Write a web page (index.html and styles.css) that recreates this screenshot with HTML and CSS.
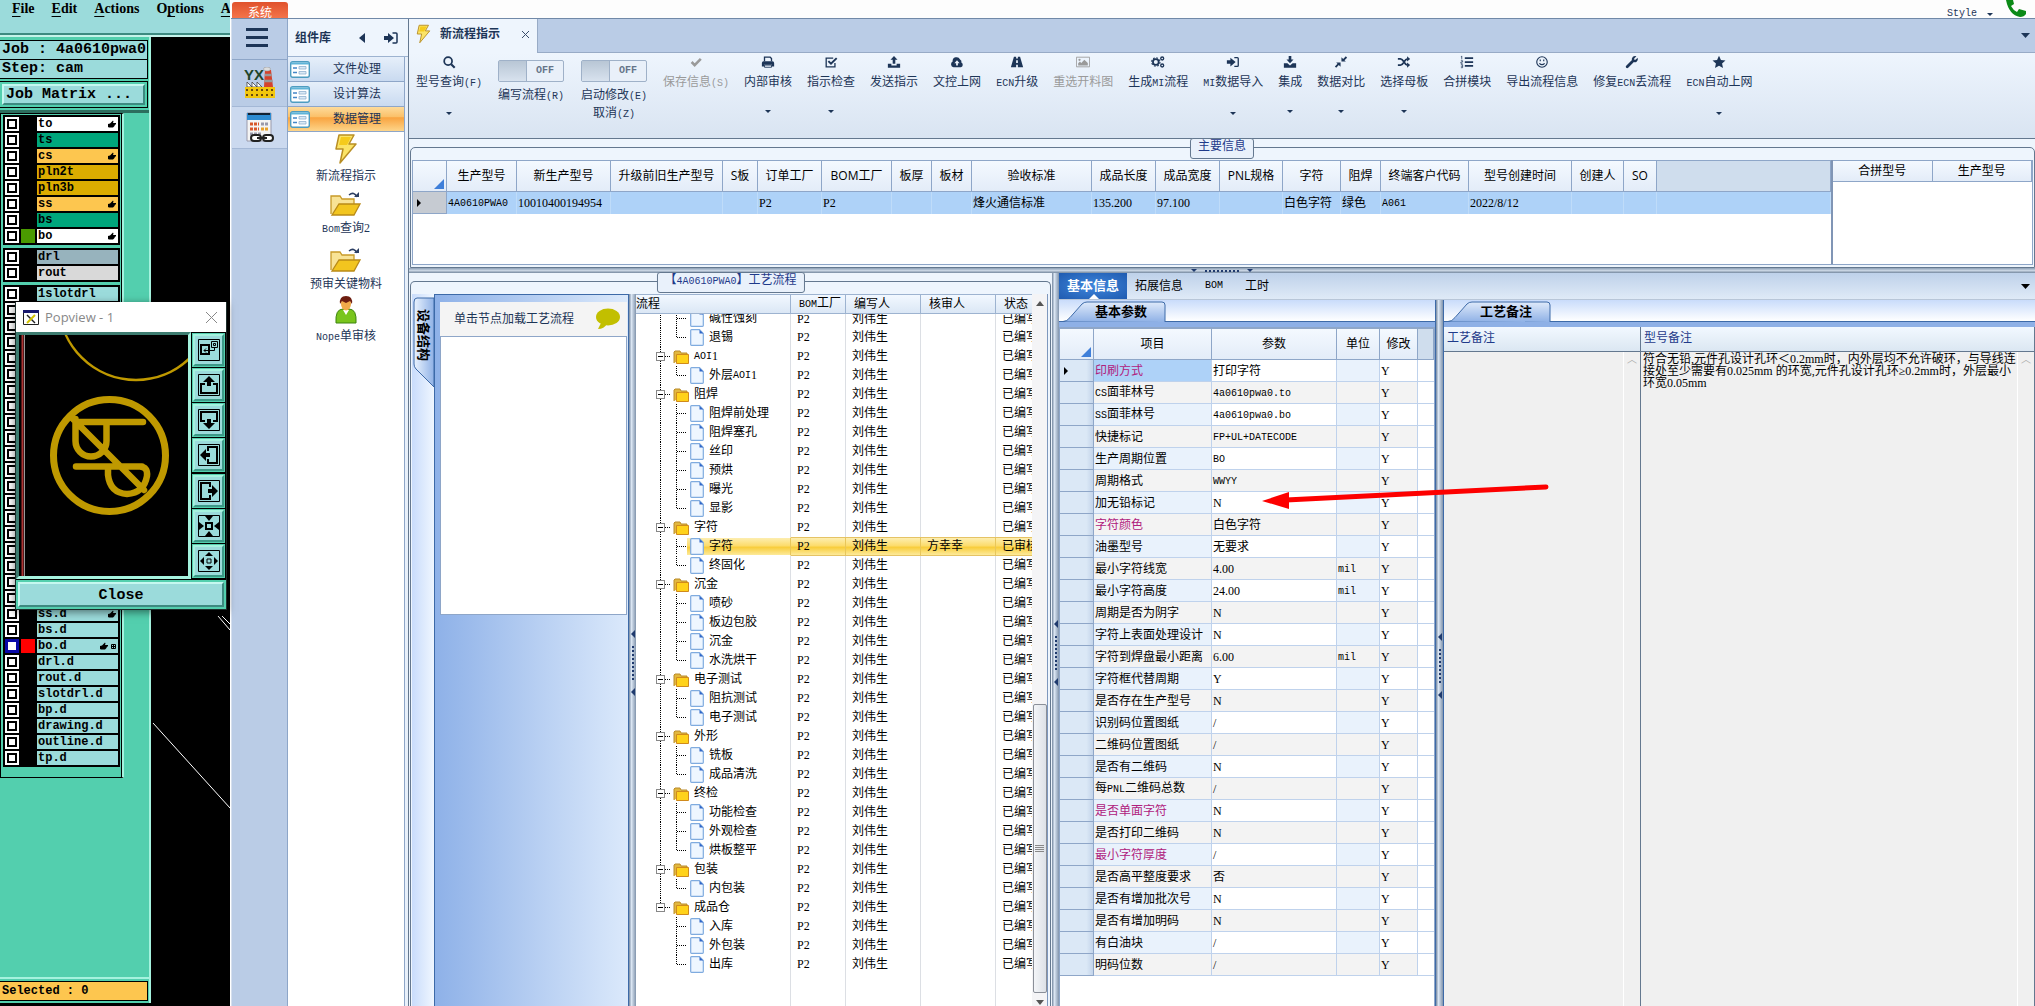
FILE: index.html
```html
<!doctype html>
<html lang="zh-CN">
<head>
<meta charset="utf-8">
<title>新流程指示</title>
<link rel="stylesheet" href="styles.css">
</head>
<body>
<svg class="sprite" aria-hidden="true">
	<symbol id="i-search" viewBox="0 0 16 16"><circle cx="7" cy="7" r="4.5" fill="none" stroke="currentColor" stroke-width="2"/><path d="M10.5 10.5l4 4" stroke="currentColor" stroke-width="2.4"/></symbol>
	<symbol id="i-check" viewBox="0 0 16 16"><path d="M3 8l3.5 3.5L13.5 4.5" fill="none" stroke="currentColor" stroke-width="3"/></symbol>
	<symbol id="i-print" viewBox="0 0 16 16"><path d="M4 7V2.5h6.5l1.500 1.500v3" fill="none" stroke="currentColor" stroke-width="1.500"/><path d="M1 9q0-2 2-2h10q2 0 2 2v4h-2.500v-2h-9v2H1z" fill="currentColor"/><path d="M4 11.500h8v2.500H4z" fill="none" stroke="currentColor"/></symbol>
	<symbol id="i-square" viewBox="0 0 16 16"><path d="M12.500 9v4.500h-10V3.500h8" fill="none" stroke="currentColor" stroke-width="1.500"/><path d="M5 7l3 3 6.500-6.500" fill="none" stroke="currentColor" stroke-width="2.200"/></symbol>
	<symbol id="i-upload" viewBox="0 0 16 16"><path d="M8 1l4 4.500H9.500V10h-3V5.500H4zM1 10h4v2h6v-2h4v4.500H1z" fill="currentColor"/></symbol>
	<symbol id="i-download" viewBox="0 0 16 16"><path d="M6.500 1h3v4H12L8 9.500 4 5h2.500zM1 9.500h4l3 2.500 3-2.500h4v5H1z" fill="currentColor"/></symbol>
	<symbol id="i-cloud" viewBox="0 0 16 16"><path d="M4 14a3.500 3.500 0 0 1-1-6.500A4.500 4.500 0 0 1 11.500 5 3 3 0 0 1 13 8.500 3 3 0 0 1 12.500 14z" fill="currentColor"/><path d="M8 6l3 3.500H9V12H7V9.500H5z" fill="#eef4fc"/></symbol>
	<symbol id="i-road" viewBox="0 0 16 16"><path d="M4.500 2h2.500v2h2V2h2.500l3.500 12H9v-3H7v3H1zM7 6v3h2V6z" fill="currentColor" fill-rule="evenodd"/></symbol>
	<symbol id="i-image" viewBox="0 0 16 16"><path d="M.500 2.500h15v11H.500z" fill="none" stroke="currentColor"/><circle cx="4" cy="5.500" r="1.300" fill="currentColor"/><path d="M2.500 12V9.500l2-2 1.500 1.500 3.500-3.500 4 3.500V12z" fill="currentColor"/></symbol>
	<symbol id="i-gears" viewBox="0 0 16 16"><circle cx="5.500" cy="8" r="3.300" fill="none" stroke="currentColor" stroke-width="2"/><circle cx="5.500" cy="8" r="4.800" fill="none" stroke="currentColor" stroke-width="1.200" stroke-dasharray="2 1.770"/><circle cx="12.800" cy="4" r="1.700" fill="none" stroke="currentColor" stroke-width="1.500"/><circle cx="12.800" cy="12" r="1.700" fill="none" stroke="currentColor" stroke-width="1.500"/></symbol>
	<symbol id="i-signin" viewBox="0 0 16 16"><path d="M1 6h4V3l6 5-6 5v-3H1z" fill="currentColor"/><path d="M9.500 3H13q1 0 1 1v8q0 1-1 1H9.500" fill="none" stroke="currentColor" stroke-width="1.500"/></symbol>
	<symbol id="i-compress" viewBox="0 0 16 16"><path d="M8.500 7.500V2.500l2 2L13.500 1.500l1.500 1.500-3 3 1.500 1.500zM7.500 8.500v5l-2-2-3 3L1 13l3-3-1.500-1.500z" fill="currentColor"/></symbol>
	<symbol id="i-shuffle" viewBox="0 0 16 16"><path d="M1 4.500h3c4 0 4 7 8 7M1 11.500h3c4 0 4-7 8-7" fill="none" stroke="currentColor" stroke-width="2"/><path d="M11.500 1.500l3.500 3-3.500 3zM11.500 8.500l3.500 3-3.500 3z" fill="currentColor"/></symbol>
	<symbol id="i-list" viewBox="0 0 16 16"><path d="M5.500 3.500H15M5.500 8H15M5.500 12.500H15" stroke="currentColor" stroke-width="2"/><path d="M2 1v4M1 2h1M1 6.500h2v1.500H1v1.500h2M1 11h2v3.500H1M1 12.800h2" fill="none" stroke="currentColor" stroke-width=".8"/></symbol>
	<symbol id="i-smile" viewBox="0 0 16 16"><circle cx="8" cy="8" r="6" fill="none" stroke="currentColor" stroke-width="1.300"/><path d="M6 5v2M10 5v2M5 9.500q3 3 6 0" fill="none" stroke="currentColor" stroke-width="1.300"/></symbol>
	<symbol id="i-wrench" viewBox="0 0 16 16"><path d="M2.500 13.500l6-6" stroke="currentColor" stroke-width="3.200" stroke-linecap="round"/><path d="M13 1.500L10.500 4v1.500H12L14.500 3q1 3-1.500 5-3 1-5-1-1-3 1-5 2-1.200 4-.5z" fill="currentColor"/></symbol>
	<symbol id="i-star" viewBox="0 0 16 16"><path d="M8 .8l2.200 4.800 5.200.6-3.900 3.500 1.100 5.200L8 12.300l-4.600 2.600 1.100-5.200L.6 6.200l5.200-.6z" fill="currentColor"/></symbol>
	<symbol id="i-bolt" viewBox="0 0 24 32"><path d="M5 2h15l-5 9h7L6 30l3-14H2z" fill="#fbe467" stroke="#b98f25" stroke-width="1.500" stroke-linejoin="round"/><path d="M7 4h10l-4 8H5z" fill="#f5cb1c"/></symbol>
	<symbol id="i-open" viewBox="0 0 32 26"><path d="M1 23V5h9l2 3h12v5" fill="#f8e396" stroke="#c79a28" stroke-width="1.300"/><path d="M2 24l7-11h21l-6 11z" fill="#f2c51f" stroke="#b98a17" stroke-width="1.300"/><path d="M19 4q5-4 8 2" fill="none" stroke="#2c3f63" stroke-width="1.600"/><path d="M24 6h5V1z" fill="#2c3f63"/></symbol>
	<symbol id="i-user" viewBox="0 0 24 30"><path d="M2 28q-1-14 7-14h6q8 0 7 14z" fill="#79c51d" stroke="#3d8410"/><path d="M9 15l3 5 3-5z" fill="#fff"/><ellipse cx="12" cy="9" rx="5" ry="6.500" fill="#f0a94a"/><path d="M6 9q-1-8 6-8t6 8l-2-3-4 2-4-2z" fill="#6d1d10"/></symbol>
	<symbol id="i-form" viewBox="0 0 20 17"><rect x=".7" y=".7" width="18.600" height="15.600" rx="2" fill="#fff" stroke="#4d9cc0" stroke-width="1.400"/><path d="M1 2.500h18" stroke="#5fb4d8" stroke-width="2"/><path d="M3 7h4M3 11.500h4" stroke="#4487c7" stroke-width="1.600"/><path d="M9 5.500h7v2.500H9zM9 10.500h7v2.500H9z" fill="#dbe9f5" stroke="#8fb1cf" stroke-width=".8"/></symbol>
	<symbol id="i-folder" viewBox="0 0 16 16"><path d="M1 14V3l1-1h5l1 2h6v3" fill="#e2b83f" stroke="#b98a2a"/><path d="M3.500 5.500h12v9h-12z" fill="#ffd21a" stroke="#d08a1c"/></symbol>
	<symbol id="i-doc" viewBox="0 0 14 17"><path d="M.7 1.500q0-.8.800-.8h8L13.300 4.500v11q0 .8-.8.800h-11q-.8 0-.8-.8z" fill="#eef6ff" stroke="#7fabdf" stroke-width="1.200"/><path d="M9.500 1v3.500h3.800z" fill="#2f66c8"/></symbol>
	<symbol id="i-hand" viewBox="0 0 8 8"><path d="M0 4l2-.500L5 .500l.500 1L5 3h3v1.500H7L6.500 6 5 7.500H1L0 7z" fill="#000"/></symbol>
</svg>

<div class="desktop">
	<section class="cam">
		<nav class="cam-menu">
			<a href="#"><u>F</u>ile</a>
			<a href="#"><u>E</u>dit</a>
			<a href="#"><u>A</u>ctions</a>
			<a href="#">O<u>p</u>tions</a>
			<a href="#"><u>A</u></a>
		</nav>
		<div class="cam-body">
			<div class="cam-side">
				<div class="job">
					<p>Job : 4a0610pwa0</p>
					<p>Step: cam</p>
				</div>
				<div class="job-btn"><button type="button">Job Matrix ...</button></div>
				<div class="layers-wrap">
					<div class="layers" id="layers"></div>
				</div>
				<p class="selected">Selected : 0</p>
			</div>
			<svg class="board" viewBox="0 0 79 969" width="79" height="969" preserveAspectRatio="xMinYMin slice">
				<path d="M2 686l77 85M67 579l12 14M71 579l8 8" stroke="#fff" fill="none"/>
			</svg>
		</div>

		<div class="popview">
			<header>
				<svg width="16" height="15" viewBox="0 0 16 15"><path d="M.5.5h15v14H.5z" fill="#fff" stroke="#222"/><path d="M0 0h16v3H0z" fill="#1a1a6e"/><path d="M4 5l8 8" stroke="#222" stroke-width="1.500"/><path d="M12 5l-8 8" stroke="#d4c400" stroke-width="2"/></svg>
				<h2>Popview - 1</h2>
				<button type="button" class="x" aria-label="关闭"><svg width="11" height="11"><path d="M0 0l11 11M11 0L0 11" stroke="#888"/></svg></button>
			</header>
			<div class="pop-body">
				<svg class="view" width="169" height="241" viewBox="18 336 169 241">
					<path d="M21.500 336v241" stroke="#a33" stroke-width="2"/><path d="M23.500 336v241" stroke="#999"/>
					<g fill="none" stroke="#bf9900">
						<circle cx="135" cy="304" r="77" stroke-width="2.500"/>
						<circle cx="108.500" cy="456.500" r="56" stroke-width="7"/>
						<path d="M71 419l72 72M75 423h67M75 467.500h66M74.500 420v22a15.500 15.500 0 0 0 31 0v-19M107 468v8q2 18 19 19 17-1 20-18 1-9-7-9.500" stroke-width="6.500" stroke-linecap="round"/>
					</g>
				</svg>
				<div class="tools">
					<button type="button" aria-label="窗口"><svg viewBox="0 0 22 22"><path d="M.5.5h21v21H.5z"/><path d="M3 6h8v9H3z" class="w"/><path d="M13.500 2.500h6v6h-6zM15.500 4.500h2v2h-2zM16.500 9v2.500H6M8 9.500l-2 2 2 2"/></svg></button>
					<button type="button" aria-label="上移"><svg viewBox="0 0 22 22"><path d="M.5.5h21v21H.5z"/><path d="M7 10H3v9h16v-9h-4" class="w"/><path d="M11 2l6 6H5zM9 8h4v4H9z" class="f"/></svg></button>
					<button type="button" aria-label="下移"><svg viewBox="0 0 22 22"><path d="M.5.5h21v21H.5z"/><path d="M7 12H3V3h16v9h-4" class="w"/><path d="M11 20l6-6H5zM9 10h4v4H9z" class="f"/></svg></button>
					<button type="button" aria-label="左移"><svg viewBox="0 0 22 22"><path d="M.5.5h21v21H.5z"/><path d="M10 7V3h9v16h-9v-4" class="w"/><path d="M2 11l6 6V5zM8 9h4v4H8z" class="f"/></svg></button>
					<button type="button" aria-label="右移"><svg viewBox="0 0 22 22"><path d="M.5.5h21v21H.5z"/><path d="M12 7V3H3v16h9v-4" class="w"/><path d="M20 11l-6 6V5zM10 9h4v4h-4z" class="f"/></svg></button>
					<button type="button" aria-label="缩小"><svg viewBox="0 0 22 22"><path d="M.5.5h21v21H.5z"/><path d="M8 8h6v6H8z" class="w"/><path d="M7 1h8l-4 5zM7 21h8l-4-5zM1 7v8l5-4zM21 7v8l-5-4z" class="f"/></svg></button>
					<button type="button" aria-label="放大"><svg viewBox="0 0 22 22"><path d="M.5.5h21v21H.5z"/><path d="M9 9h4v4H9z"/><path d="M7 6h8l-4-4zM7 16h8l-4 4zM6 7v8l-4-4zM16 7v8l4-4z" class="f"/></svg></button>
				</div>
			</div>
			<div class="pop-foot"><button type="button">Close</button></div>
		</div>
	</section>

	<section class="erp">
		<header class="title-bar">
			<a href="#" class="sys">系统</a>
			<button type="button" class="style-btn">Style<i class="caret"></i></button>
			<svg class="phone" width="22" height="18" viewBox="0 0 22 18"><path d="M1 0h7l1 4-3 2q2 4 6 6l2-3 7 2v3q-2 3-6 3Q4 15 1 0z" fill="#0b8a17"/></svg>
		</header>
		<div class="erp-body">
			<nav class="rail">
				<button type="button" class="burger" aria-label="菜单"><i></i><i></i><i></i></button>
				<button type="button" class="rail-item" aria-label="YX">
					<svg width="32" height="32" viewBox="0 0 32 32"><text x="0" y="13" class="yx">YX</text><path d="M20 20l1-17h6l2 17z" fill="#d5432c"/><path d="M21 8h6.500M20.500 14h8" stroke="#999" stroke-width="2.500"/><ellipse cx="23" cy="2" rx="3.500" ry="2" fill="#ddd" stroke="#999" stroke-width=".6"/><path d="M3 20v-5l5 5v-5l5 5v-5l5 5z" fill="#fff" stroke="#444" stroke-width=".8"/><path d="M1 20h30v11H1z" fill="#f2c70e"/><path d="M2 23h28M2 28h28" stroke="#6a4a10" stroke-width="2" stroke-dasharray="2 3"/></svg>
				</button>
				<button type="button" class="rail-item on" aria-label="计算">
					<svg width="28" height="32" viewBox="0 0 28 32"><path d="M1 1h24v28H1z" fill="#f4f4f4" stroke="#99a"/><path d="M1 1h24v7H1z" fill="#2d8bd1"/><path d="M2 2h22" stroke="#123" stroke-width="2"/><path d="M4 12h9M4 17h9" stroke="#d8572a" stroke-width="3" stroke-dasharray="3 1"/><path d="M15 12h8M4 22h12" stroke="#99a" stroke-width="3" stroke-dasharray="3 1"/><path d="M15 17h8" stroke="#e8a12c" stroke-width="3" stroke-dasharray="3 1"/><rect x="5" y="23" width="10" height="6" rx="3" fill="#fff" stroke="#222" stroke-width="2"/><rect x="17" y="23" width="10" height="6" rx="3" fill="#fff" stroke="#222" stroke-width="2"/><path d="M11 26h10" stroke="#222" stroke-width="2"/></svg>
				</button>
			</nav>

			<aside class="lib">
				<header>
					<h2>组件库</h2>
					<svg width="6" height="10"><path d="M6 0v10L0 5z" fill="#1d3557"/></svg>
					<svg width="16" height="16"><use href="#i-signin"/></svg>
				</header>
				<div class="lib-box">
					<button type="button" class="acc"><svg width="20" height="17"><use href="#i-form"/></svg><span>文件处理</span></button>
					<button type="button" class="acc"><svg width="20" height="17"><use href="#i-form"/></svg><span>设计算法</span></button>
					<button type="button" class="acc on"><svg width="20" height="17"><use href="#i-form"/></svg><span>数据管理</span></button>
					<a href="#" class="tool"><svg width="24" height="32"><use href="#i-bolt"/></svg>新流程指示</a>
					<a href="#" class="tool"><svg width="32" height="26"><use href="#i-open"/></svg><span><span class="en">Bom</span>查询2</span></a>
					<a href="#" class="tool"><svg width="32" height="26"><use href="#i-open"/></svg>预审关键物料</a>
					<a href="#" class="tool"><svg width="24" height="30"><use href="#i-user"/></svg><span><span class="en">Nope</span>单审核</span></a>
				</div>
			</aside>

			<main>
				<div class="doc-tabs">
					<div class="doc-tab"><svg width="15" height="20"><use href="#i-bolt"/></svg><b>新流程指示</b><button type="button" class="x" aria-label="关闭标签"><svg width="7" height="7"><path d="M0 0l7 7M7 0L0 7" stroke="#3a4d6b"/></svg></button></div>
					<svg class="more" width="9" height="5"><path d="M0 0h9L4.500 5z" fill="#1d3557"/></svg>
				</div>
				<div class="toolbar" id="toolbar"></div>

				<section class="group main-info">
					<h3 class="cap">主要信息</h3>
					<div class="frame">
						<div class="pair">
							<div class="main-grid">
								<table class="grid top" id="orders"></table>
							</div>
							<div class="side-grid">
								<table class="grid"><tr><th>合拼型号</th><th>生产型号</th></tr></table>
							</div>
						</div>
					</div>
				</section>
				<div class="hsplit"><i></i><b></b><i></i></div>

				<div class="lower">
					<section class="group flow">
						<h3 class="cap">【<span class="en">4A0610PWA0</span>】工艺流程</h3>
						<div class="frame open">
							<div class="dock-tabs">
								<svg width="23" height="94" viewBox="0 0 23 94"><path d="M22 4H5Q2 4 2 8v62q0 3 2 5l18 18z" fill="url(#dg)" stroke="#3d6aa8"/><defs><linearGradient id="dg"><stop offset="0" stop-color="#eaf3fe"/><stop offset="1" stop-color="#8fb1e6"/></linearGradient></defs></svg>
								<b>设备结构</b>
							</div>
							<div class="dock">
								<header>单击节点加载工艺流程<svg width="26" height="22" viewBox="0 0 26 22"><ellipse cx="13" cy="9" rx="12" ry="8.500" fill="#c2bf00"/><path d="M7 13l-4 8q6 0 9-5z" fill="#c2bf00"/></svg></header>
								<div class="paper"></div>
							</div>
							<div class="vsplit"><i></i><b></b><i></i></div>
							<div class="tree">
								<table id="tree"></table>
								<div class="scroll"><i class="up"></i><span><em></em></span><i class="down"></i></div>
							</div>
						</div>
					</section>
					<div class="vsplit"><i></i><b></b><i></i></div>

					<section class="info">
						<nav class="info-tabs">
							<a href="#" class="on">基本信息</a><a href="#">拓展信息</a><a href="#" class="en">BOM</a><a href="#">工时</a>
							<svg class="more" width="9" height="5"><path d="M0 0h9L4.500 5z" fill="#000"/></svg>
						</nav>
						<div class="info-body">
							<div class="params">
								<div class="sub"><svg width="104" height="21" viewBox="0 0 104 21"><path d="M1 20.500q4 0 7-4L20 3q2-2 5-2h75q3 0 3 3v17" fill="url(#sg)" stroke="#3d6aa8"/><defs><linearGradient id="sg" x2="0" y2="1"><stop offset="0" stop-color="#dfeafa"/><stop offset="1" stop-color="#8fb1e6"/></linearGradient></defs></svg><b>基本参数</b></div>
								<div class="params-box"><table class="grid" id="params"></table></div>
							</div>
							<div class="vsplit"><i></i><b></b><i></i></div>
							<div class="notes">
								<div class="sub"><svg width="104" height="21" viewBox="0 0 104 21"><path d="M1 20.500q4 0 7-4L20 3q2-2 5-2h75q3 0 3 3v17" fill="url(#sg)" stroke="#3d6aa8"/></svg><b>工艺备注</b></div>
								<div class="note-cols">
									<div class="note"><label for="n1">工艺备注</label><div class="memo"><textarea id="n1"></textarea><span class="bar">︿</span></div></div>
									<div class="note"><label for="n2">型号备注</label><div class="memo"><textarea id="n2">符合无铅,元件孔设计孔环＜0.2mm时，内外层均不允许破环，与导线连
接处至少需要有0.025mm 的环宽,元件孔设计孔环≥0.2mm时，外层最小
环宽0.05mm</textarea><span class="bar">︿</span></div></div>
								</div>
							</div>
						</div>
					</section>
				</div>
			</main>
		</div>
	</section>

	<svg class="mark" width="290" height="26" viewBox="0 0 290 26"><path d="M284 4L24 17" stroke="#fd0000" stroke-width="5" stroke-linecap="round"/><path d="M0 18L27 9v17z" fill="#fd0000"/></svg>
</div>
<script src="app.js"></script>
</body>
</html>
```
FILE: styles.css
```css
*{padding:0; margin:0; box-sizing:border-box;}
body{overflow:hidden; background:#fff; font:12px/16px "Liberation Serif","Noto Sans CJK SC",serif; color:#000;}
button{border:none; background:none; font:inherit; color:inherit;}
a{color:inherit; text-decoration:none;}
h2,h3{font-size:12px;}
svg{display:block; flex:none;}
.sprite{position:absolute; width:0; height:0;}
.en{font-family:"Liberation Mono",monospace; font-size:10px;}
.desktop{display:flex; height:100vh; position:relative; overflow:hidden;}
.mark{position:absolute; left:1262px; top:483px;}

/* cam window */
.cam{width:231px; flex:none; position:relative; display:flex; flex-direction:column; background:#000; border-right:1px solid #fff;}
.cam-menu{height:37px; background:#9bdbdb; border-bottom:2px solid #c5f3ea; box-shadow:inset 0 -2px 0 #3d8a80; display:flex; gap:17px; padding:0 0 0 12px; overflow:hidden; font:bold 14px/18px "Liberation Serif",serif;}
.cam-menu u{text-underline-offset:3px;}
.cam-body{flex:1; display:flex; min-height:0;}
.cam-side{width:151px; flex:none; background:#53cfae; border-right:2px solid #a5f2de; display:flex; flex-direction:column; padding-top:3px; margin-bottom:3px;}
.job,.job-btn,.selected{margin-right:1px; border:1px solid #000; border-left:none; font:bold 15px/18px "Liberation Mono",monospace; white-space:nowrap;}
.job{background:#9bdbdb;}
.job p{height:18px; padding-left:2px;}
.job p+p{border-top:1px solid #000; height:19px;}
.job-btn{margin-top:2px; height:27px; padding:2px;}
.job-btn button{width:100%; height:21px; background:#9bdbdb; border:2px solid; border-color:#c5f8f0 #3d8a80 #3d8a80 #c5f8f0; text-align:left; padding-left:2px; line-height:16px;}
.layers-wrap{flex:1; min-height:0; border-top:3px solid #2c6e5e; margin-top:2px; border-bottom:2px solid #a5f2de;}
.layers{width:124px; border:1px solid #000; border-right:2px solid #a5f2de; padding:1px 2px 10px; display:flex; flex-direction:column; gap:3px; box-shadow:inset -1px 0 0 #000;}
.lgroup{background:#000; padding:2px 2px 0; width:117px;}
.layer{display:flex; gap:2px; height:16px; font:bold 12px/14px "Liberation Mono",monospace;}
.layer input{appearance:none; width:14px; height:14px; border:2px solid #fff; background:#fff; box-shadow:inset 0 0 0 2px #000;}
.layer input.cur{border-color:#0909a8; box-shadow:inset 0 0 0 1px #0909a8;}
.layer i{width:14px; height:14px;}
.layer label{flex:1; height:14px; padding:0 2px 0 1px; display:flex; align-items:center; gap:3px; background:#9bdbdb;}
.layer label span{flex:1;}
.layer .green{background:#4a9a00;}
.layer .red{background:#f00;}
.layer .c-white{background:#fff;}
.layer .c-teal{background:#00a67c;}
.layer .c-orange{background:#fdc64f;}
.layer .c-gold{background:#dbac00;}
.layer .c-gray{background:#97b3bd;}
.layer .c-silver{background:#d9d9d9;}
.selected{height:20px; margin:2px 1px 2px 0; background:#fdc64f; font-size:12px; padding-left:2px;}
.board{height:100%;}

.popview{position:absolute; left:15px; top:302px; width:212px; background:#53cfae; border:1px solid #1c2d2a; border-top:none; box-shadow:0 2px 8px rgba(0,0,0,.5);}
.popview header{height:30px; background:#fff; display:flex; align-items:center; gap:6px; padding:0 9px 0 7px;}
.popview h2{flex:1; font:13px/18px "Open Sans",sans-serif; color:#888;}
.pop-body{display:flex; background:#000; gap:1px;}
.view{border:3px solid; border-color:#3d7c70 #a5f2de #a5f2de #3d7c70; box-sizing:content-box;}
.tools{display:grid; gap:1px; padding:1px 1px 1px 0;}
.tools button{width:33px; height:34px; background:#9bdbdb; border:3px solid; border-color:#a5f2de #3d9a88 #3d9a88 #a5f2de; outline:1px solid #53cfae; outline-offset:-1px; display:flex; align-items:center; justify-content:center;}
.tools svg{width:22px; height:22px; fill:none; stroke:#000;}
.tools .w{stroke-width:2;}
.tools .f{fill:#000; stroke:none;}
.pop-foot{border-top:1px solid #000; padding:2px;}
.pop-foot button{width:100%; height:25px; background:#9bdbdb; border:2px solid; border-color:#c5f8f0 #3d8a80 #3d8a80 #c5f8f0; font:bold 15px/18px "Liberation Mono",monospace; padding-top:2px;}

/* erp frame */
.erp{flex:1; min-width:0; display:flex; flex-direction:column; color:#1d3557;}
.title-bar{height:19px; background:#fdfdfd; border-bottom:1px solid #7189a8; display:flex; padding:2px 8px 0 1px; overflow:hidden; align-items:flex-start;}
.sys{width:56px; height:17px; border-radius:3px 3px 0 0; background:linear-gradient(#e0522c,#f5764c); color:#fff; text-align:center; line-height:22px; margin-right:auto;}
.style-btn{display:flex; align-items:center; gap:10px; line-height:24px; font-family:"Liberation Mono",monospace; font-size:10px; margin:0 12px 0 0;}
.phone{margin-top:-2px;}
.caret{width:0; height:0; border:3px solid transparent; border-top-color:#1d3557; border-bottom:none;}
.erp-body{flex:1; display:flex; min-height:0;}
.rail{width:57px; flex:none; background:#bacce6; border-left:1px solid #d5dfee; border-right:1px solid #8ea6c8;}
.burger{display:flex; flex-direction:column; gap:5px; margin:9px 14px 12px; width:22px;}
.burger i{height:3px; background:#1d3557;}
.rail-item{display:flex; justify-content:center; align-items:center; width:100%; height:43px;}
.rail-item:nth-child(2){border-top:1px solid #8ea6c8; height:47px;}
.rail-item.on{background:#cbd9ef; border:1px solid #a4b8d6; border-width:1px 0;}
.yx{font:bold 15px "Liberation Sans",sans-serif; fill:#20452b;}

.lib{width:120px; flex:none; background:#e8f0fa; display:flex; flex-direction:column;}
.lib header{height:38px; display:flex; align-items:center; padding:0 9px 0 7px; background:#eef5fd; border-bottom:1px solid #9db3d0;}
.lib h2{flex:1;}
.lib header svg+svg{margin-left:18px;}
.lib-box{flex:1; background:#fff; border-right:1px solid #8ea6c8; width:117px;}
.acc{width:100%; height:25px; display:flex; align-items:center; padding-left:2px; background:linear-gradient(#e6effa,#c9daf0); border-bottom:1px solid #8ea6c8;}
.acc span{flex:1;}
.acc.on{background:linear-gradient(#fddb9b,#fbc16a 40%,#f9a440 45%,#fdd58a);}
.tool{display:flex; flex-direction:column; align-items:center; gap:3px; height:54px; justify-content:flex-end;}
.tool:first-of-type{height:52px;}

main{flex:1; min-width:0; display:flex; flex-direction:column; border-left:1px solid #64788f; background:#eef5fd;}
.doc-tabs{height:34px; background:#bacce6; border-bottom:1px solid #98abc6; display:flex; align-items:center; justify-content:space-between; padding-right:5px;}
.doc-tab{height:34px; display:flex; align-items:center; width:129px; background:#eef5fd; border-right:1px solid #98abc6; padding:0 8px 3px 7px; gap:9px; font-size:13px;}
.doc-tab .x{margin-left:auto;}
.doc-tab b{white-space:nowrap; font-size:12px;}
.toolbar{height:86px; border-bottom:1px solid #64788f; background:linear-gradient(#eef5fd,#d9e4f2); display:flex; align-items:flex-start; gap:15px; padding:0 7px;}
.toolbar button{display:flex; flex-direction:column; align-items:center; white-space:nowrap;}
.toolbar button>svg{width:14px; height:14px; margin:2px 0 5px;}
.toolbar .caret{margin-top:20px;}
.toolbar .off{color:#9a9a9a;}
.toolbar .sw{width:68px;}
.switch{display:flex; width:66px; height:22px; border:1px solid #9fb1c8; border-radius:2px; margin:7px 0 5px; font:bold 10px/20px "Liberation Mono",monospace; color:#66758a; background:#e9f0f9;}
.switch i{width:28px; background:linear-gradient(#b8c6d5,#d8e2ee); border-right:1px solid #9fb1c8;}
.switch b{flex:1;}

.group{position:relative; padding:8px 1px 0; flex:none;}
.main-info{padding-right:0;}
.cap{position:absolute; top:-1px; left:50%; transform:translateX(-50%); height:21px; padding:0 7px; border:1px solid #64788f; border-radius:3px; background:#e9f1fb; font-weight:normal; line-height:14px; color:#1f3a8a; white-space:nowrap;}
.frame{border:1px solid #64788f; border-radius:5px 5px 0 0; padding:12px 1px 2px;}
.pair{display:flex; height:105px; border:1px solid #8ea6c8; border-width:0 1px 1px;}
.main-grid{flex:1; background:#fff;}
.side-grid{width:201px; background:#fff; border-left:2px solid #8095b5;}
.grid{width:100%; table-layout:fixed; border-collapse:separate; border-spacing:0; color:#000;}
.grid th{height:32px; font:12px/16px "Open Sans","Noto Sans CJK SC",sans-serif; background:linear-gradient(#f4f9ff,#e3ecf8); border:1px solid #8ea6c8; border-width:1px 1px 1px 0; white-space:nowrap;}
.side-grid .grid th{height:22px;}
.grid th.corner{vertical-align:bottom;}
.corner i{display:block; width:0; height:0; margin:0 2px 2px auto; border:5px solid #3f7fd9; border-top-color:transparent; border-left-color:transparent;}
.grid th.rest{background:#cfdded;}
.grid td{height:22px; padding-left:1px; line-height:16px; white-space:nowrap; overflow:hidden;}
.grid.top td{background:#aed2f8; border-right:1px solid #bfdcf9;}
.grid.top td:first-child{background:#c6cbd2; border:1px solid #8ea6c8; border-width:0 1px 1px 0;}
.ptr{display:block; width:0; height:0; border:4px solid transparent; border-left-color:#000; border-right:none; margin-left:3px;}
.hsplit{height:5px; flex:none; background:linear-gradient(#8d9fb5,#c8d4e2 50%,#75889f); display:flex; justify-content:center; align-items:center; gap:8px;}
.hsplit i{border:3px solid transparent; border-top-color:#1f3a6e; border-bottom:none;}
.hsplit b{width:34px; height:2px; background:repeating-linear-gradient(90deg,#1f3a6e 0 2px,transparent 2px 4px);}

.lower{flex:1; min-height:0; display:flex;}
.flow{width:643px; display:flex; flex-direction:column;}
.frame.open{flex:1; min-height:0; display:flex; border-bottom:none; padding:12px 2px 0 1px;}
.vsplit{width:7px; flex:none; padding-top:26px; background:linear-gradient(90deg,#74879f,#dbe6f3 35%,#8194ac); display:flex; flex-direction:column; justify-content:center; align-items:center; gap:8px;}
.vsplit i{border:4px solid transparent; border-right-color:#1f3a6e; border-left:none;}
.vsplit b{width:2px; height:34px; background:repeating-linear-gradient(#1f3a6e 0 2px,transparent 2px 4px);}
.dock-tabs{width:22px; flex:none; background:linear-gradient(90deg,#c9dcfb,#eff6ff); position:relative; color:#000;}
.dock-tabs b{position:absolute; left:3px; top:15px; writing-mode:vertical-rl; text-orientation:sideways; font-size:13px;}
.dock{width:195px; flex:none; border:1px solid #3d6aa8; border-bottom:none; padding:7px 1px 0 5px; background:linear-gradient(90deg,#8eb1e8,#dbe9fb);}
.dock header{height:34px; background:#f4f4f4; display:flex; align-items:center; justify-content:space-between; padding:0 6px 0 14px; color:#1d3557;}
.paper{height:279px; background:#fff; border:1px solid #8ea6c8;}
.tree{flex:1; min-width:0; background:#fff; display:flex; border-right:1px solid #7d97bd;}
.tree table{width:396px; flex:none; table-layout:fixed; border-spacing:0; height:0; color:#000;}
.tree th{height:19px; text-align:left; font-weight:normal; padding-left:8px; background:linear-gradient(#f2f8ff,#dbe7f5); border:1px solid #9db3d0; border-width:1px 1px 1px 0; line-height:16px; white-space:nowrap; overflow:hidden;}
.tree th:first-child{padding-left:0;}
.tree td{height:19px; line-height:17px; border-right:1px solid #dcdfe4; padding-left:6px; white-space:nowrap; overflow:hidden;}
.tree td:first-child{padding-left:0;}
.tree th:last-child,.tree td:last-child{border-right:none;}
.node{display:flex; align-items:center; height:19px;}
.node svg+svg{margin-right:5px;}
.cut td{height:14px;}
.cut td>div{height:14px; display:flex; align-items:flex-end; overflow:hidden;}
.hot td{background:linear-gradient(#fdeeb0,#fcdc6c 45%,#f8cd3c 55%,#fdea9a); border-right-color:#e8c65a; border-top:1px solid #e5c365; border-bottom:1px solid #e5c365; line-height:15px;}
.hot td:first-child{background:linear-gradient(#fdeeb0,#fcdc6c 45%,#f8cd3c 55%,#fdea9a) 51px 0 no-repeat; border-top-color:transparent; border-bottom-color:transparent;}
.hot .node{height:17px;}
.fill td{height:34px;}
.scroll{flex:1; background:#f4f4f6; display:flex; flex-direction:column; align-items:center; padding:7px 0 1px;}
.scroll .up,.scroll .down{border:4px solid transparent;}
.scroll .up{border-bottom:5px solid #555; border-top:none;}
.scroll .down{border-top:5px solid #555; border-bottom:none;}
.scroll span{width:14px; margin:auto 0 7px; height:289px; border:1px solid #8a8f98; border-radius:2px; background:linear-gradient(90deg,#f3f5f8,#dde1e7); display:flex; align-items:center; justify-content:center;}
.scroll em{width:9px; height:7px; background:repeating-linear-gradient(#888 0 1px,transparent 1px 2px);}

.info{flex:1; min-width:0; display:flex; flex-direction:column; color:#000;}
.info-tabs{height:27px; display:flex; align-items:center; background:linear-gradient(#bed1ea,#dfeaf7); border-bottom:1px solid #b8c6d8; padding-right:5px;}
.info-tabs a{padding:0 8px; margin-right:6px;}
.info-tabs .on{width:68px; padding:0; margin-right:0; text-align:center; font-weight:bold; font-size:13px; line-height:26px; color:#fff; background:radial-gradient(#3f86dc,#1f5bb0); position:relative;}
.info-tabs .on::after{content:""; position:absolute; bottom:0; left:30px; border:5px solid transparent; border-bottom-color:#fff; border-top:none;}
.info-tabs .more{margin-left:auto;}
.info-body{flex:1; min-height:0; display:flex;}
.params{width:377px; display:flex; flex-direction:column; border-right:1px solid #3d6aa8;}
.sub{height:27px; flex:none; background:linear-gradient(#c9dcfb,#fff 21px,#3d6aa8 21px,#3d6aa8 22px,#8eb0e6 22px); position:relative; padding:1px 0 0 3px;}
.sub b{position:absolute; left:36px; top:4px; font-size:13px;}
.params-box{flex:1; background:#fff; border:1px solid #8ea6c8; border-bottom:none;}
.params-box td{border:1px solid #bfd2ec; border-width:0 1px 1px 0; background:#f3f3f3;}
.params-box tr:nth-child(even) td{background:#fff;}
.params-box tr:nth-child(even) td:nth-child(2),.params-box tr:nth-child(even) td:nth-child(4){background:#e9f2fc;}
.params-box tr td:first-child,.params-box tr:nth-child(even) td:first-child{background:linear-gradient(90deg,#dbe8f6 80%,#c3d4ea); border-color:#8ea6c8;}
.params-box tr td:last-child{background:#fff; border-right:none;}
.params-box tr:nth-child(2) td:nth-child(2){background:#aed2f8;}
.pink{color:#b0207c;}
.notes{flex:1; min-width:0; display:flex; flex-direction:column; border-left:1px solid #3d6aa8;}
.note-cols{flex:1; display:grid; grid-template-columns:1fr 2fr; min-height:0;}
.note{display:flex; flex-direction:column; border-right:1px solid #64788f;}
.note label{height:25px; padding-left:3px; line-height:23px; color:#1f3a8a; background:linear-gradient(#f2f8ff,#dbe7f2); border-bottom:1px solid #64788f;}
.memo{flex:1; display:flex; background:#f0f0f0;}
.memo textarea{flex:1; min-width:0; border:none; resize:none; outline:none; background:#f0f0f0; font:12px/12px "Liberation Serif","Noto Sans CJK SC",serif; padding:1px 0 0 2px; overflow:hidden; white-space:pre;}
.bar{width:17px; border-left:1px solid #fff; color:#aaa; text-align:center; font-size:10px;}
```
FILE: app.js
```js
function $(id){
	return document.getElementById(id);
}
function en(s){
	return s.replace(/[A-Za-z()+.]*[A-Za-z(][A-Za-z()+.]*/g,'<span class="en">$&</span>');
}

// toolbar: icon, text, has arrow, disabled
var tools=[
	['search','型号查询(F)',1],
	['sw','编写流程(R)'],
	['sw','启动修改(E)<br>取消(Z)'],
	['check','保存信息(S)',0,1],
	['print','内部审核',1],
	['square','指示检查',1],
	['upload','发送指示'],
	['cloud','文控上网'],
	['road','ECN升级'],
	['image','重选开料图',0,1],
	['gears','生成MI流程'],
	['signin','MI数据导入',1],
	['download','集成',1],
	['compress','数据对比',1],
	['shuffle','选择母板',1],
	['list','合拼模块'],
	['smile','导出流程信息'],
	['wrench','修复ECN丢流程'],
	['star','ECN自动上网',1]
];
$('toolbar').innerHTML=tools.map(function(t){
	var text=t[1].split('<br>').map(en).join('<br>');
	if(t[0]=='sw'){
		return '<button type="button" role="switch" aria-checked="false" class="sw"><span class="switch"><i></i><b>OFF</b></span><span>'+text+'</span></button>';
	}
	return '<button type="button"'+(t[3]?' class="off"':'')+'><svg><use href="#i-'+t[0]+'"/></svg><span>'+text+'</span>'+(t[2]?'<i class="caret"></i>':'')+'</button>';
}).join('');

// cam layers
var hidden=[];
for(var i=0; i<19; i++){
	hidden.push(['','']);
}
var groups=[
	[['to','white',1],['ts','teal'],['cs','orange',1],['pln2t','gold'],['pln3b','gold'],['ss','orange',1],['bs','teal'],['bo','white',1,'green']],
	[['drl','gray'],['rout','silver']],
	[['1slotdrl','']].concat(hidden,[['ss.d','',1],['bs.d',''],['bo.d','',1,'red'],['drl.d',''],['rout.d',''],['slotdrl.d',''],['bp.d',''],['drawing.d',''],['outline.d',''],['tp.d','']])
];
var grid='<svg width="5" height="5"><path d="M.5.500h4v4h-4zM2.500 0v5M0 2.500h5" fill="none" stroke="#000"/></svg>';
$('layers').innerHTML=groups.map(function(g,gi){
	return '<div class="lgroup">'+g.map(function(l,i){
		var id='l'+gi+'_'+i;
		return '<div class="layer"><input type="checkbox" id="'+id+'"'+(l[3]=='red'?' class="cur"':'')+'><i class="'+(l[3]||'')+'"></i><label for="'+id+'" class="c-'+l[1]+'"><span>'+l[0]+'</span>'+(l[2]?'<svg width="8" height="8"><use href="#i-hand"/></svg>':'')+(l[3]=='red'?grid:'')+'</label></div>';
	}).join('')+'</div>';
}).join('');

// order grid
var cols=[['',34,''],['生产型号',70,'<span class="en">4A0610PWA0</span>'],['新生产型号',94,'10010400194954'],['升级前旧生产型号',112,''],['S板',35,''],['订单工厂',64,'P2'],['BOM工厂',70,'P2'],['板厚',40,''],['板材',40,''],['验收标准',120,'烽火通信标准'],['成品长度',64,'135.200'],['成品宽度',64,'97.100'],['PNL规格',63,''],['字符',58,'白色字符'],['阻焊',40,'绿色'],['终端客户代码',88,'<span class="en">A061</span>'],['型号创建时间',103,'2022/8/12'],['创建人',52,''],['SO',33,'']];
$('orders').innerHTML='<colgroup>'+cols.map(function(c){return '<col style="width:'+c[1]+'px">';}).join('')+'<col></colgroup><tr>'+
	cols.map(function(c,i){return i?'<th>'+c[0]+'</th>':'<th class="corner"><i></i></th>';}).join('')+'<th class="rest"></th></tr><tr>'+
	cols.map(function(c,i){return i?'<td>'+c[2]+'</td>':'<td><i class="ptr"></i></td>';}).join('')+'<td></td></tr>';

// process tree
var flow=[
	['',['碱性蚀刻','退锡']],
	['AOI1',['外层AOI1']],
	['阻焊',['阻焊前处理','阻焊塞孔','丝印','预烘','曝光','显影']],
	['字符',['字符','终固化']],
	['沉金',['喷砂','板边包胶','沉金','水洗烘干']],
	['电子测试',['阻抗测试','电子测试']],
	['外形',['铣板','成品清洗']],
	['终检',['功能检查','外观检查','烘板整平']],
	['包装',['内包装']],
	['成品仓',['入库','外包装','出库']]
];
function lines(d,w){
	return '<svg width="'+w+'" height="19"><path d="'+d+'" fill="none" stroke="#000" stroke-dasharray="1 1"/>';
}
function row(tree,who,state,cls){
	var cells=[tree,'P2','刘伟生',who,state];
	return '<tr class="'+(cls||'')+'">'+cells.map(function(c){return '<td>'+(cls=='cut'?'<div>'+c+'</div>':c)+'</td>';}).join('')+'</tr>';
}
var html='<colgroup><col style="width:155px"><col style="width:55px"><col style="width:75px"><col style="width:75px"><col></colgroup><tr><th>流程</th><th>'+en('BOM')+'工厂</th><th>编写人</th><th>核审人</th><th>状态</th></tr>';
flow.forEach(function(g,gi){
	var last=gi==flow.length-1;
	if(g[0]){
		html+=row('<div class="node">'+lines('M24.500 0v'+(last?9:19)+'M25 9.500h9',37)+'<rect x="20.500" y="5.500" width="8" height="8" fill="#fff" stroke="#888"/><path d="M22 9.500h5" stroke="#000"/></svg><svg width="16" height="16"><use href="#i-folder"/></svg>'+en(g[0])+'</div>','','已编写');
	}
	g[1].forEach(function(n,i){
		var end=i==g[1].length-1;
		var hot=g[0]=='字符'&&i==0;
		html+=row('<div class="node">'+lines((last?'':'M24.500 0v19')+'M40.500 0v'+(end?9:19)+'M41 9.500h9',54)+'</svg><svg width="14" height="17"><use href="#i-doc"/></svg>'+en(n)+'</div>',hot?'方幸幸':'',hot?'已审核':'已编写',hot?'hot':(gi==0&&i==0?'cut':''));
	});
});
$('tree').innerHTML=html+'<tr class="fill"><td></td><td></td><td></td><td></td><td></td></tr>';

// parameters: name, value, unit, required
var params=[
	['印刷方式','打印字符','',1],['CS面菲林号','4a0610pwa0.to'],['SS面菲林号','4a0610pwa0.bo'],['快捷标记','FP+UL+DATECODE'],
	['生产周期位置','BO'],['周期格式','WWYY'],['加无铅标记','N'],['字符颜色','白色字符','',1],['油墨型号','无要求'],
	['最小字符线宽','4.00','mil'],['最小字符高度','24.00','mil'],['周期是否为阴字','N'],['字符上表面处理设计','N'],
	['字符到焊盘最小距离','6.00','mil'],['字符框代替周期','Y'],['是否存在生产型号','N'],['识别码位置图纸','/'],
	['二维码位置图纸','/'],['是否有二维码','N'],['每PNL二维码总数','/'],['是否单面字符','N','',1],['是否打印二维码','N'],
	['最小字符厚度','/','',1],['是否高平整度要求','否'],['是否有增加批次号','N'],['是否有增加明码','N'],['有白油块','/'],['明码位数','/']
];
// long codes go monospace, single letters stay in the text face
function code(s){
	return /^[\w+.]*[A-Za-z][\w+.]+$/.test(s)?'<span class="en">'+s+'</span>':s;
}
$('params').innerHTML='<colgroup><col style="width:34px"><col style="width:118px"><col style="width:125px"><col style="width:43px"><col style="width:38px"><col></colgroup><tr><th class="corner"><i></i></th><th>项目</th><th>参数</th><th>单位</th><th>修改</th><th class="rest"></th></tr>'+
	params.map(function(p,i){
		return '<tr><td>'+(i?'':'<i class="ptr"></i>')+'</td><td'+(p[3]?' class="pink"':'')+'>'+en(p[0])+'</td><td>'+code(p[1])+'</td><td>'+code(p[2]||'')+'</td><td>Y</td><td></td></tr>';
	}).join('');
```
